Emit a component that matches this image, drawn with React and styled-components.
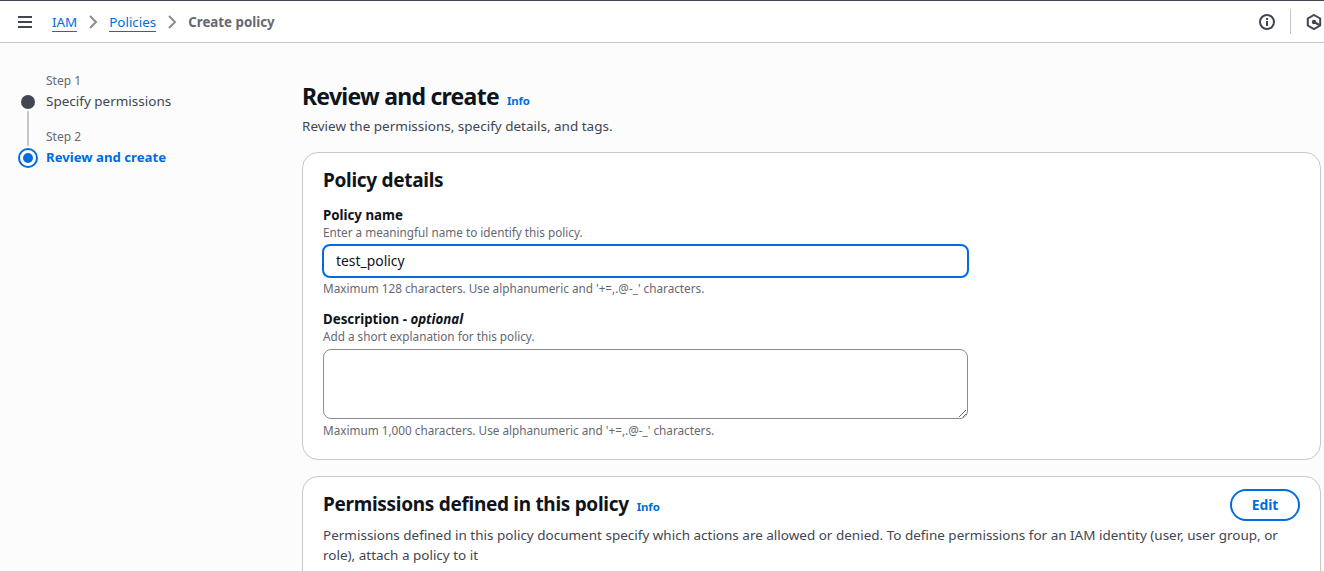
import React from 'react';
import styled, { createGlobalStyle } from 'styled-components';

const Global = createGlobalStyle`
  * { box-sizing: border-box; }
  body { margin: 0; background: #fcfcfd; color: #424650; font: 14px/20px "Noto Sans", "Open Sans", sans-serif; overflow: hidden; }
`;
const Page = styled.div`height: 571px; overflow: hidden; border-top: 1px solid #424650;`;
const TopBar = styled.header`
  display: flex; align-items: center; justify-content: space-between; height: 42px;
  padding-left: 17px; background: #fff; border-bottom: 1px solid #c6c6cd; overflow: hidden;
`;
const Crumbs = styled.nav`display: flex; align-items: center;`;
const MenuIcon = styled.svg`width: 16px; height: 16px; margin-right: 19px;`;
const Chevron = styled.svg`width: 16px; height: 16px; margin: 0 8px;`;
const Crumb = styled.a`
  font-size: 13.4px; line-height: 18px; color: #006ce0; border-bottom: 1px solid #006ce0; margin-top: 1px;
`;
const CurrentCrumb = styled.span`font-size: 13.3px; font-weight: 700; color: #656871;`;
const Tools = styled.div`display: flex; align-items: center; flex: none; width: 66px;`;
const ToolIcon = styled.svg`width: 18px; height: 18px; flex: none;`;
const Divider = styled.div`width: 1px; height: 25px; margin: 0 14px 0 14px; background: #c6c6cd; flex: none;`;
const Body = styled.div`display: flex;`;
const Steps = styled.aside`flex: none; width: 302px; padding: 28px 0 0 18px;`;
const Step = styled.div`display: flex; gap: 8px; height: 56px;`;
const Rail = styled.div`display: flex; flex-direction: column; align-items: center; width: 20px; height: 76px; padding-top: 20px;`;
const Dot = styled.svg`width: 20px; height: 20px; flex: none; display: block;`;
const Line = styled.div`width: 2px; height: 35px; background: #c6c6cd;`;
const StepNumber = styled.div`font-size: 12px; line-height: 20px; color: #656871;`;
const StepName = styled.div`
  font-size: ${p => (p.$active ? '13.2px' : '13.49px')}; line-height: 20px;
  color: ${p => (p.$active ? '#006ce0' : '#424650')}; font-weight: ${p => (p.$active ? 700 : 400)};
`;
const Main = styled.main`flex: none; width: 1019px; padding-top: 39px;`;
const HeadingRow = styled.div`display: flex; align-items: baseline; gap: 8px;`;
const Title = styled.h1`margin: 0; font-size: 23px; line-height: 29px; font-weight: 700; letter-spacing: -0.74px; color: #0f141a;`;
const Info = styled.a`font-size: 11.4px; line-height: 16px; font-weight: 700; letter-spacing: -0.1px; color: #006ce0;`;
const Intro = styled.p`margin: 5px 0 16px; font-size: 13.49px; line-height: 20px;`;
const Card = styled.section`
  height: ${p => p.$height}px; margin-bottom: 16px; padding: ${p => p.$top}px 20px 0; background: #fff; border: 1px solid #c6c6cd; border-radius: 16px;
`;
const CardTitle = styled.h2`margin: 0; font-size: 19px; line-height: 24px; font-weight: 700; letter-spacing: -0.3px; color: #0f141a;`;
const Field = styled.div`margin-top: ${p => p.$gap}px; width: 645px;`;
const Label = styled.label`display: block; font-size: 13.3px; line-height: 20px; font-weight: 700; color: #0f141a;`;
const Hint = styled.div`padding-bottom: 2px; font-size: 11.74px; line-height: 14px; color: #656871;`;
const TextInput = styled.input`
  display: block; width: 647px; height: 34px; margin: 3px 0 3px -1px; padding: 0 12px 1px; border: 2px solid #006ce0; border-radius: 8px;
  background: #fff; color: #0f141a; font: 13.9px/20px "Noto Sans", sans-serif; outline: none;
`;
const TextArea = styled.textarea`
  display: block; width: 645px; height: 70px; margin: 4px 0; border: 1px solid #8c8c94; border-radius: 8px; background: #fff; resize: vertical;
`;
const CardHeader = styled.div`display: flex; justify-content: space-between; align-items: flex-start; height: 32px;`;
const PermissionsHeading = styled(HeadingRow)`padding-top: 3px;`;
const EditButton = styled.button`
  width: 70px; height: 32px; border: 2px solid #006ce0; border-radius: 20px; background: #fff; color: #006ce0; padding: 0;
  font: 700 13.8px/20px "Noto Sans", sans-serif;
`;
const CardText = styled.p`margin: 4px 0 0; font-size: 13.49px; line-height: 20px; white-space: nowrap;`;

const Separator = () => (
  <Chevron viewBox="0 0 16 16" fill="none" stroke="#8c8c94" strokeWidth="2"><path d="m5 2 6 6-6 6" /></Chevron>
);

export default function App() {
  return (
    <Page>
      <Global />
      <TopBar>
        <Crumbs>
          <MenuIcon viewBox="0 0 16 16" fill="none" stroke="#424650" strokeWidth="2"><path d="M1 3h14M1 8h14M1 13h14" /></MenuIcon>
          <Crumb>IAM</Crumb><Separator /><Crumb>Policies</Crumb><Separator /><CurrentCrumb>Create policy</CurrentCrumb>
        </Crumbs>
        <Tools>
          <ToolIcon viewBox="0 0 18 18" fill="none" stroke="#424650" strokeWidth="2"><circle cx="9" cy="9" r="7" /><path d="M9 8v5M9 5v2" /></ToolIcon>
          <Divider />
          <ToolIcon viewBox="0 0 18 18" fill="none" stroke="#424650" strokeWidth="2"><path d="m9 2 6.2 3.5v7L9 16l-6.2-3.5v-7z" /><circle cx="9" cy="9" r="2.2" fill="#424650" stroke="none" /><path d="m9 9 5.5 3" /></ToolIcon>
        </Tools>
      </TopBar>
      <Body>
        <Steps>
          <Step>
            <Rail><Dot viewBox="0 0 20 20"><circle cx="10" cy="11" r="7" fill="#424650" /></Dot><Line /></Rail>
            <div><StepNumber>Step 1</StepNumber><StepName>Specify permissions</StepName></div>
          </Step>
          <Step>
            <Rail><Dot viewBox="0 0 20 20" overflow="visible"><circle cx="10" cy="11" r="9" fill="#fff" stroke="#006ce0" strokeWidth="2" /><circle cx="10" cy="11" r="5" fill="#006ce0" /></Dot></Rail>
            <div><StepNumber>Step 2</StepNumber><StepName $active>Review and create</StepName></div>
          </Step>
        </Steps>
        <Main>
          <HeadingRow><Title>Review and create</Title><Info>Info</Info></HeadingRow>
          <Intro>Review the permissions, specify details, and tags.</Intro>
          <Card $height={308} $top={15}>
            <CardTitle>Policy details</CardTitle>
            <Field $gap={13}>
              <Label>Policy name</Label>
              <Hint>Enter a meaningful name to identify this policy.</Hint>
              <TextInput defaultValue="test_policy" />
              <Hint>Maximum 128 characters. Use alphanumeric and '+=,.@-_' characters.</Hint>
            </Field>
            <Field $gap={12}>
              <Label>Description - <i>optional</i></Label>
              <Hint>Add a short explanation for this policy.</Hint>
              <TextArea />
              <Hint>Maximum 1,000 characters. Use alphanumeric and '+=,.@-_' characters.</Hint>
            </Field>
          </Card>
          <Card $height={200} $top={12}>
            <CardHeader>
              <PermissionsHeading><CardTitle>Permissions defined in this policy</CardTitle><Info>Info</Info></PermissionsHeading>
              <EditButton>Edit</EditButton>
            </CardHeader>
            <CardText>Permissions defined in this policy document specify which actions are allowed or denied. To define permissions for an IAM identity (user, user group, or<br />role), attach a policy to it</CardText>
          </Card>
        </Main>
      </Body>
    </Page>
  );
}
